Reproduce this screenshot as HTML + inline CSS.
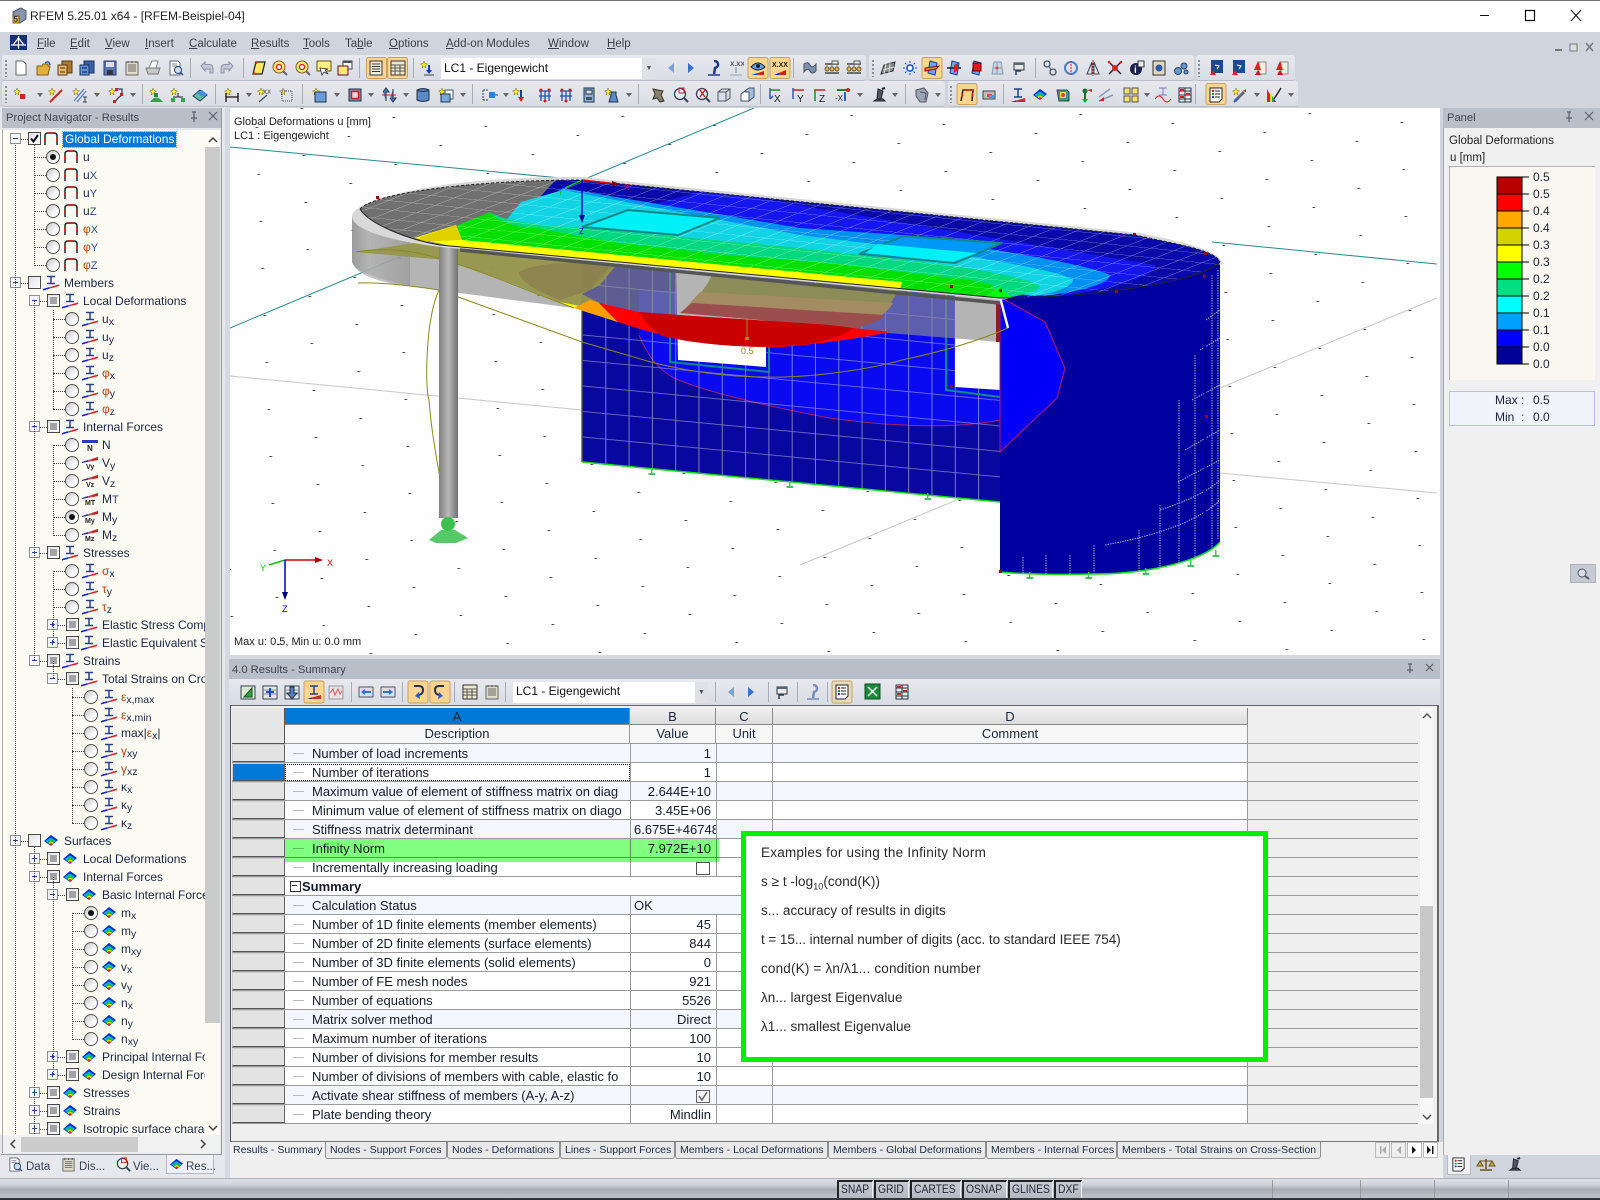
<!DOCTYPE html>
<html lang="en"><head><meta charset="utf-8"><title>RFEM 5.25.01 x64 - [RFEM-Beispiel-04]</title>
<style>
html,body{margin:0;padding:0;width:1600px;height:1200px;overflow:hidden;background:#d0d4dd;font-family:"Liberation Sans",sans-serif;font-size:12px;color:#1a2438}
.a{position:absolute}
.tx{position:absolute;white-space:nowrap}
#title{left:0;top:0;width:1600px;height:32px;background:#fff;border-top:1px solid #707070;box-sizing:border-box}
.mn{position:absolute;top:38px;font-size:11.5px;color:#3a3f4a;white-space:nowrap}
.tb{position:absolute;border-radius:3px;background:linear-gradient(#e7e9ee,#d9dce3);border-bottom:1px solid #b9bdc7;box-sizing:border-box}
.hd{position:absolute;background:#b9bfc9;color:#3c4452;height:20px;line-height:21px;box-sizing:border-box;padding-left:4px;font-size:11.2px}
#tree{left:0;top:130px;width:205px;height:1005px;overflow:hidden;background:#fbfbf4}
.r{position:relative;height:18px;line-height:18px;white-space:nowrap;--l:0}
.r.P::before,.r.K::before{content:"";position:absolute;top:9px;border-top:1px dotted #444}
.r.P::before{left:calc(21px + var(--l)*18.7px);width:7px}
.r.K::before{left:calc(34px + var(--l)*19px);width:12px}
.e{position:absolute;left:calc(10px + var(--l)*18.7px);top:3px;width:11px;height:11px;box-sizing:border-box;border:1px solid #8b8f98;background:#f4f5f8}
.e::before{content:"";position:absolute;left:2px;top:4px;width:5px;height:1px;background:#27468c}
.e.q::after{content:"";position:absolute;left:4px;top:2px;width:1px;height:5px;background:#27468c}
.c{position:absolute;left:calc(28px + var(--l)*19px);top:2px;width:13px;height:13px;box-sizing:border-box;border:1px solid #4a4a4a;background:linear-gradient(135deg,#dfe1e6,#fff)}
.c.f::after{content:"";position:absolute;left:2px;top:2px;width:7px;height:7px;background:#a3a3a3}
.o{position:absolute;left:calc(46px + var(--l)*19px);top:2px;width:14px;height:14px;box-sizing:border-box;border:1px solid #555;border-radius:50%;background:linear-gradient(135deg,#c5c5c5,#fff 70%)}
.o.n::after{content:"";position:absolute;left:3px;top:3px;width:6px;height:6px;border-radius:50%;background:#111}
.i{position:absolute;top:1px;width:16px;height:16px;overflow:visible}
.P .i{left:calc(43px + var(--l)*19px)}
.K .i{left:calc(63px + var(--l)*19px)}
.t{position:absolute;font-size:12px;color:#1b2640}
.P .t{left:calc(64px + var(--l)*19px)}
.K .t{left:calc(83px + var(--l)*19px)}
.t sub{font-size:10.5px;line-height:0;vertical-align:-2px}
.t small{font-size:11px;color:#2d4a86}
.t u{text-decoration:none;color:#a8480f}
.sel{background:#0078d7;color:#fff!important;outline:1px dotted #e08a20;padding:0 2px;line-height:15px}
.tr{position:absolute;left:232px;width:1186px;height:19px;line-height:18px;font-size:13px;box-sizing:border-box;border-bottom:1px solid #9b9b9b;color:#141c2c;--f:#fff;
background:linear-gradient(#9b9b9b,#9b9b9b) 398px 0/1px 100% no-repeat,linear-gradient(#9b9b9b,#9b9b9b) 484px 0/1px 100% no-repeat,linear-gradient(#9b9b9b,#9b9b9b) 540px 0/1px 100% no-repeat,linear-gradient(#9b9b9b,#9b9b9b) 1015px 0/1px 100% no-repeat,linear-gradient(90deg,var(--f) 1015px,#efefef 1015px)}
.tr.b{--f:#f4f6fe}
.tr.n{background:linear-gradient(#9b9b9b,#9b9b9b) 398px 0/1px 100% no-repeat,linear-gradient(#9b9b9b,#9b9b9b) 540px 0/1px 100% no-repeat,linear-gradient(#9b9b9b,#9b9b9b) 1015px 0/1px 100% no-repeat,linear-gradient(90deg,var(--f) 1015px,#efefef 1015px)}
.st{position:absolute;left:0;top:0;width:53px;height:18px;box-sizing:border-box;background:#e3e3e3;border:1px solid #cfcfcf;border-bottom:1px solid #555;border-right:1px solid #666}
.ds{position:absolute;left:80px;top:2px;height:16px;line-height:16px;white-space:nowrap;width:317px;overflow:hidden}
.dl{position:absolute;left:61px;top:9px;width:11px;height:1px;background:#bbb}
.v{position:absolute;left:399px;width:80px;text-align:right;top:1px;height:17px;line-height:17px;white-space:nowrap}
.ch{position:absolute;height:17px;top:708px;line-height:17px;text-align:center;font-size:13px;background:linear-gradient(#f0f0f0,#dcdcdc);box-sizing:border-box;border-right:1px solid #8a8a8a;border-bottom:1px solid #8a8a8a}
.ch2{position:absolute;top:725px;height:19px;line-height:18px;text-align:center;font-size:13px;background:#f6f6f6;box-sizing:border-box;border-right:1px solid #9b9b9b;border-bottom:1px solid #9b9b9b}
.tab{position:absolute;top:1142px;height:17px;line-height:17px;font-size:10.5px;background:#e9e9e9;border:1px solid #8f8f8f;border-top:none;box-sizing:border-box;padding-left:4px;color:#1d2a44;border-radius:0 0 3px 3px;white-space:nowrap}
.sb{position:absolute;top:1180px;height:18px;line-height:14px;font-size:12px;box-sizing:border-box;border-left:2px solid #222;border-top:2px solid #222;border-right:1px solid #eee;padding-left:2px;color:#20283a;background:linear-gradient(#c9ccd3,#b4b8c1);overflow:hidden;white-space:nowrap}
.sb span{display:inline-block;transform:scaleX(.86);transform-origin:left center}
.lb{position:absolute;left:1533px;font-size:12px;color:#1a2438;line-height:14px}
.gb{position:absolute;left:761px;font-size:13.5px;letter-spacing:.15px;color:#2a2a2a;white-space:nowrap;line-height:18px}
.gb sub{font-size:9px;line-height:0}
</style></head><body>

<div id="title" class="a"></div>
<div class="tx" style="left:30px;top:9px;font-size:12px;color:#222">RFEM 5.25.01 x64 - [RFEM-Beispiel-04]</div>
<svg class="a" style="left:10px;top:7px" width="18" height="18" viewBox="0 0 18 18"><path d="M3 5l8-4 5 3v8l-6 4-7-4z" fill="#8796ad" stroke="#4c566a"/><path d="M3 9h6v7H3z" fill="#e9c04a" stroke="#7a5c14"/><text x="3.5" y="15" font-size="8" font-family="Liberation Sans" font-weight="bold" fill="#333">5</text></svg>
<svg class="a" style="left:1470px;top:4px" width="125" height="24" viewBox="0 0 125 24"><path d="M10 11.5h9" stroke="#111" stroke-width="1"/><path d="M55.500 6.500h9v10h-9z" fill="none" stroke="#111" stroke-width="1.200"/><path d="M101 6l10 11M111 6l-10 11" stroke="#111" stroke-width="1"/></svg>

<!-- menu -->
<svg class="a" style="left:10px;top:35px" width="18" height="16"><rect width="17" height="15" fill="#15307a"/><path d="M1 10h15M8.500 1v13M3 10l5.500-7 5.500 7" stroke="#fff" fill="none" stroke-width="1.200"/></svg>
<span class="mn" style="left:37px"><u>F</u>ile</span><span class="mn" style="left:70px"><u>E</u>dit</span><span class="mn" style="left:105px"><u>V</u>iew</span><span class="mn" style="left:145px"><u>I</u>nsert</span><span class="mn" style="left:189px"><u>C</u>alculate</span><span class="mn" style="left:251px"><u>R</u>esults</span><span class="mn" style="left:303px"><u>T</u>ools</span><span class="mn" style="left:345px">Ta<u>b</u>le</span><span class="mn" style="left:389px"><u>O</u>ptions</span><span class="mn" style="left:446px"><u>A</u>dd-on Modules</span><span class="mn" style="left:548px"><u>W</u>indow</span><span class="mn" style="left:607px"><u>H</u>elp</span>
<svg class="a" style="left:1550px;top:40px" width="50" height="14"><path d="M5 10h7" stroke="#777" stroke-width="2"/><path d="M20 4h7v7h-7z" fill="#ddd" stroke="#777"/><path d="M36 3l7 8M43 3l-7 8" stroke="#777" stroke-width="1.500"/></svg>

<!-- toolbars -->
<div class="tb" style="left:2px;top:55px;width:864px;height:26px"></div>
<div class="tb" style="left:869px;top:55px;width:325px;height:26px"></div>
<div class="tb" style="left:1196px;top:55px;width:99px;height:26px"></div>
<div class="tb" style="left:2px;top:81px;width:943px;height:26px"></div>
<div class="tb" style="left:948px;top:81px;width:350px;height:26px"></div>
<div class="a" style="left:441px;top:58px;width:201px;height:21px;background:#fff"></div>
<div class="tx" style="left:444px;top:61px;font-size:12px;color:#111">LC1 - Eigengewicht</div>
<div class="a" style="left:642px;top:58px;width:14px;height:21px;background:#dfe1e6;text-align:center;font-size:7px;line-height:21px;color:#555">▼</div>

<!-- navigator -->
<div class="a" style="left:0;top:107px;width:225px;height:1071px;background:#e6e8ed"></div>
<div class="hd" style="left:2px;top:108px;width:219px">Project Navigator - Results</div>
<div id="tree" class="a">
<div class="r P"><i class="e"></i><i class="c"></i><svg class="c" style="border:0;background:none;overflow:visible" viewBox="0 0 13 13"><path d="M3 6.500l2.500 3L10 3" fill="none" stroke="#111" stroke-width="2"/></svg><svg class="i"><use href="#def"/></svg><span class="t sel" style="left:63px;top:2px">Global Deformations</span></div>
<div class="r K"><i class="o n"></i><svg class="i"><use href="#def"/></svg><span class="t">u</span></div>
<div class="r K"><i class="o"></i><svg class="i"><use href="#def"/></svg><span class="t">u<small>X</small></span></div>
<div class="r K"><i class="o"></i><svg class="i"><use href="#def"/></svg><span class="t">u<small>Y</small></span></div>
<div class="r K"><i class="o"></i><svg class="i"><use href="#def"/></svg><span class="t">u<small>Z</small></span></div>
<div class="r K"><i class="o"></i><svg class="i"><use href="#def"/></svg><span class="t"><u>φ</u><small>X</small></span></div>
<div class="r K"><i class="o"></i><svg class="i"><use href="#def"/></svg><span class="t"><u>φ</u><small>Y</small></span></div>
<div class="r K"><i class="o"></i><svg class="i"><use href="#def"/></svg><span class="t"><u>φ</u><small>Z</small></span></div>
<div class="r P"><i class="e"></i><i class="c"></i><svg class="i"><use href="#mem"/></svg><span class="t">Members</span></div>
<div class="r P" style="--l:1"><i class="e"></i><i class="c f"></i><svg class="i"><use href="#mem"/></svg><span class="t">Local Deformations</span></div>
<div class="r K" style="--l:1"><i class="o"></i><svg class="i"><use href="#mem"/></svg><span class="t">u<sub>x</sub></span></div>
<div class="r K" style="--l:1"><i class="o"></i><svg class="i"><use href="#mem"/></svg><span class="t">u<sub>y</sub></span></div>
<div class="r K" style="--l:1"><i class="o"></i><svg class="i"><use href="#mem"/></svg><span class="t">u<sub>z</sub></span></div>
<div class="r K" style="--l:1"><i class="o"></i><svg class="i"><use href="#mem"/></svg><span class="t"><u>φ</u><sub>x</sub></span></div>
<div class="r K" style="--l:1"><i class="o"></i><svg class="i"><use href="#mem"/></svg><span class="t"><u>φ</u><sub>y</sub></span></div>
<div class="r K" style="--l:1"><i class="o"></i><svg class="i"><use href="#mem"/></svg><span class="t"><u>φ</u><sub>z</sub></span></div>
<div class="r P" style="--l:1"><i class="e"></i><i class="c f"></i><svg class="i"><use href="#mem"/></svg><span class="t">Internal Forces</span></div>
<div class="r K" style="--l:1"><i class="o"></i><svg class="i" viewBox="0 0 16 16"><path d="M0 3h16v3H0z" fill="#2a3ec0"/><text x="5" y="14" font-size="8" font-weight="bold" font-family="Liberation Sans" fill="#222">N</text></svg><span class="t">N</span></div>
<div class="r K" style="--l:1"><i class="o"></i><svg class="i" viewBox="0 0 16 16"><use href="#wdg"/><text x="4" y="14" font-size="7" font-weight="bold" font-family="Liberation Sans" fill="#222">Vy</text></svg><span class="t">V<sub>y</sub></span></div>
<div class="r K" style="--l:1"><i class="o"></i><svg class="i" viewBox="0 0 16 16"><use href="#wdg"/><text x="4" y="14" font-size="7" font-weight="bold" font-family="Liberation Sans" fill="#222">Vz</text></svg><span class="t">V<sub>z</sub></span></div>
<div class="r K" style="--l:1"><i class="o"></i><svg class="i" viewBox="0 0 16 16"><use href="#wdg"/><text x="3" y="14" font-size="7" font-weight="bold" font-family="Liberation Sans" fill="#222">MT</text></svg><span class="t">M<small>T</small></span></div>
<div class="r K" style="--l:1"><i class="o n"></i><svg class="i" viewBox="0 0 16 16"><use href="#wdg"/><text x="3" y="14" font-size="7" font-weight="bold" font-family="Liberation Sans" fill="#222">My</text></svg><span class="t">M<sub>y</sub></span></div>
<div class="r K" style="--l:1"><i class="o"></i><svg class="i" viewBox="0 0 16 16"><use href="#wdg"/><text x="3" y="14" font-size="7" font-weight="bold" font-family="Liberation Sans" fill="#222">Mz</text></svg><span class="t">M<sub>z</sub></span></div>
<div class="r P" style="--l:1"><i class="e"></i><i class="c f"></i><svg class="i"><use href="#mem"/></svg><span class="t">Stresses</span></div>
<div class="r K" style="--l:1"><i class="o"></i><svg class="i"><use href="#mem"/></svg><span class="t"><u>σ</u><sub>x</sub></span></div>
<div class="r K" style="--l:1"><i class="o"></i><svg class="i"><use href="#mem"/></svg><span class="t"><u>τ</u><sub>y</sub></span></div>
<div class="r K" style="--l:1"><i class="o"></i><svg class="i"><use href="#mem"/></svg><span class="t"><u>τ</u><sub>z</sub></span></div>
<div class="r P" style="--l:2"><i class="e q"></i><i class="c f"></i><svg class="i"><use href="#mem"/></svg><span class="t">Elastic Stress Components</span></div>
<div class="r P" style="--l:2"><i class="e q"></i><i class="c f"></i><svg class="i"><use href="#mem"/></svg><span class="t">Elastic Equivalent Stresses</span></div>
<div class="r P" style="--l:1"><i class="e"></i><i class="c f"></i><svg class="i"><use href="#mem"/></svg><span class="t">Strains</span></div>
<div class="r P" style="--l:2"><i class="e"></i><i class="c f"></i><svg class="i"><use href="#mem"/></svg><span class="t">Total Strains on Cross-Section</span></div>
<div class="r K" style="--l:2"><i class="o"></i><svg class="i"><use href="#mem"/></svg><span class="t"><u>ε</u><sub>x,max</sub></span></div>
<div class="r K" style="--l:2"><i class="o"></i><svg class="i"><use href="#mem"/></svg><span class="t"><u>ε</u><sub>x,min</sub></span></div>
<div class="r K" style="--l:2"><i class="o"></i><svg class="i"><use href="#mem"/></svg><span class="t">max|<u>ε</u><sub>x</sub>|</span></div>
<div class="r K" style="--l:2"><i class="o"></i><svg class="i"><use href="#mem"/></svg><span class="t"><u>γ</u><sub>xy</sub></span></div>
<div class="r K" style="--l:2"><i class="o"></i><svg class="i"><use href="#mem"/></svg><span class="t"><u>γ</u><sub>xz</sub></span></div>
<div class="r K" style="--l:2"><i class="o"></i><svg class="i"><use href="#mem"/></svg><span class="t">κ<sub>x</sub></span></div>
<div class="r K" style="--l:2"><i class="o"></i><svg class="i"><use href="#mem"/></svg><span class="t">κ<sub>y</sub></span></div>
<div class="r K" style="--l:2"><i class="o"></i><svg class="i"><use href="#mem"/></svg><span class="t">κ<sub>z</sub></span></div>
<div class="r P"><i class="e"></i><i class="c"></i><svg class="i"><use href="#srf"/></svg><span class="t">Surfaces</span></div>
<div class="r P" style="--l:1"><i class="e q"></i><i class="c f"></i><svg class="i"><use href="#srf"/></svg><span class="t">Local Deformations</span></div>
<div class="r P" style="--l:1"><i class="e"></i><i class="c f"></i><svg class="i"><use href="#srf"/></svg><span class="t">Internal Forces</span></div>
<div class="r P" style="--l:2"><i class="e"></i><i class="c f"></i><svg class="i"><use href="#srf"/></svg><span class="t">Basic Internal Forces</span></div>
<div class="r K" style="--l:2"><i class="o n"></i><svg class="i"><use href="#srf"/></svg><span class="t">m<sub>x</sub></span></div>
<div class="r K" style="--l:2"><i class="o"></i><svg class="i"><use href="#srf"/></svg><span class="t">m<sub>y</sub></span></div>
<div class="r K" style="--l:2"><i class="o"></i><svg class="i"><use href="#srf"/></svg><span class="t">m<sub>xy</sub></span></div>
<div class="r K" style="--l:2"><i class="o"></i><svg class="i"><use href="#srf"/></svg><span class="t">v<sub>x</sub></span></div>
<div class="r K" style="--l:2"><i class="o"></i><svg class="i"><use href="#srf"/></svg><span class="t">v<sub>y</sub></span></div>
<div class="r K" style="--l:2"><i class="o"></i><svg class="i"><use href="#srf"/></svg><span class="t">n<sub>x</sub></span></div>
<div class="r K" style="--l:2"><i class="o"></i><svg class="i"><use href="#srf"/></svg><span class="t">n<sub>y</sub></span></div>
<div class="r K" style="--l:2"><i class="o"></i><svg class="i"><use href="#srf"/></svg><span class="t">n<sub>xy</sub></span></div>
<div class="r P" style="--l:2"><i class="e q"></i><i class="c f"></i><svg class="i"><use href="#srf"/></svg><span class="t">Principal Internal Forces</span></div>
<div class="r P" style="--l:2"><i class="e q"></i><i class="c f"></i><svg class="i"><use href="#srf"/></svg><span class="t">Design Internal Forces</span></div>
<div class="r P" style="--l:1"><i class="e q"></i><i class="c f"></i><svg class="i"><use href="#srf"/></svg><span class="t">Stresses</span></div>
<div class="r P" style="--l:1"><i class="e q"></i><i class="c f"></i><svg class="i"><use href="#srf"/></svg><span class="t">Strains</span></div>
<div class="r P" style="--l:1"><i class="e q"></i><i class="c f"></i><svg class="i"><use href="#srf"/></svg><span class="t">Isotropic surface characteristics</span></div>
</div>
<svg class="a" style="left:0;top:130px" width="205" height="1005"><g stroke="#444" stroke-dasharray="1 1" fill="none"><path d="M15.500 15V1005M34.500 15V135M34.500 171V531M34.500 717V1005M53.500 180V279M53.500 315V405M53.500 441V513M53.500 531V549M53.500 747V945M72.500 558V693M72.500 783V909"/></g></svg>
<div class="a" style="left:205px;top:130px;width:15px;height:1005px;background:#fbfbf4"></div>
<div class="a" style="left:205px;top:147px;width:15px;height:876px;background:#cbcbcb"></div>
<svg class="a" style="left:207px;top:135px" width="12" height="10"><path d="M2 7l4-4 4 4" fill="none" stroke="#444" stroke-width="1.500"/></svg>
<svg class="a" style="left:207px;top:1124px" width="12" height="10"><path d="M2 2l4 4 4-4" fill="none" stroke="#444" stroke-width="1.500"/></svg>
<div class="a" style="left:3px;top:1135px;width:217px;height:18px;background:#f1f1f1"></div>
<div class="a" style="left:21px;top:1137px;width:117px;height:15px;background:#cbcbcb"></div>
<svg class="a" style="left:8px;top:1139px" width="200" height="12"><path d="M7 1L3 5l4 4M193 1l4 4-4 4" fill="none" stroke="#444" stroke-width="1.500"/></svg>
<div class="a" style="left:2px;top:130px;width:1px;height:1023px;background:#aaa"></div>
<div class="a" style="left:221px;top:108px;width:1px;height:1046px;background:#999"></div>
<div class="a" style="left:1px;top:1154px;width:221px;height:1px;background:#999"></div>
<div class="a" style="left:166px;top:1155px;width:48px;height:19px;background:#eef0f4;border:1px solid #b4b8c0;border-top:none;box-sizing:border-box"></div>
<div class="tx" style="left:26px;top:1161px;font-size:11.5px;color:#3a4355">Data</div><div class="tx" style="left:79px;top:1161px;font-size:11.5px;color:#3a4355">Dis...</div><div class="tx" style="left:133px;top:1161px;font-size:11.5px;color:#3a4355">Vie...</div><div class="tx" style="left:186px;top:1161px;font-size:11.5px;color:#3a4355">Res...</div>

<!-- 3D view -->
<div class="a" style="left:225px;top:107px;width:5px;height:548px;background:#d5d9e1"></div>
<svg class="a" style="left:230px;top:108px" width="1210" height="547" viewBox="230 108 1210 547" font-family="Liberation Sans">
<defs>
<pattern id="dots" patternUnits="userSpaceOnUse" width="1" height="1" patternTransform="matrix(92 9 -45 19 852 115)"><rect width=".018" height=".05" fill="#111"/></pattern>
<pattern id="wg" patternUnits="userSpaceOnUse" width="1" height="1" patternTransform="matrix(23.300 2.230 0 25.500 582 462)"><path d="M0 .01H1M.02 0V1" stroke="#a8a8d0" stroke-opacity=".75" stroke-width=".04" fill="none"/></pattern>
<pattern id="tg" patternUnits="userSpaceOnUse" width="1" height="1" patternTransform="matrix(23.500 2.340 -19 7.500 582 182)"><path d="M0 .02H1M.02 0V1" stroke="#fff" stroke-opacity=".42" stroke-width=".05" fill="none"/></pattern>
<clipPath id="top"><path d="M360 209C375 192 480 180 582 180L1135 235C1180 245 1215 250 1220 262C1205 280 1100 298 1000 298L440 245C410 240 370 225 360 209Z"/></clipPath>
<linearGradient id="cg" x1="0" x2="1"><stop offset="0" stop-color="#808080"/><stop offset=".5" stop-color="#b8b8b8"/><stop offset="1" stop-color="#707070"/></linearGradient>
<linearGradient id="sg" x1="0" x2="1"><stop offset="0" stop-color="#949494"/><stop offset=".3" stop-color="#b4b4b4"/><stop offset="1" stop-color="#9a9a9a"/></linearGradient>
</defs>
<rect x="230" y="108" width="1210" height="547" fill="#fefefe"/>
<rect x="230" y="108" width="1210" height="547" fill="url(#dots)"/>
<g fill="none">
<path d="M230 147L582 180M1212 242L1437 264M230 328L754 108" stroke="#2a8a8e" stroke-width="1"/>
<path d="M230 376L582 410M1220 473L1437 493M800 565L1000 482M1220 388L1437 298" stroke="#c8c8c8" stroke-width="1"/>
</g>
<!-- wall -->
<path d="M582 258L1000 297V502L582 462Z" fill="#0808a0"/>
<path d="M639 290L1000 297V420C960 428 900 428 830 418C760 405 700 390 674 378C655 368 645 350 639 335Z" fill="#0a0af0"/>
<path d="M1000 420C960 428 900 428 830 418C760 405 700 390 674 378C655 368 645 350 639 335" fill="none" stroke="#a02070"/>
<path d="M582 258L1000 297V502L582 462Z" fill="url(#wg)"/>
<path d="M676 262L766 270V367L678 360Z" fill="#fff"/>
<path d="M955 288L1000 292V390L955 387Z" fill="#fff"/>
<path d="M670 262V362L769 372V345" fill="none" stroke="#108888" stroke-width="2"/>
<path d="M946 285V390L1000 397" fill="none" stroke="#108888" stroke-width="2"/>
<path d="M582 258V462" stroke="#111"/>
<path d="M582 462L1000 502" stroke="#10e010" stroke-width="1.500"/>
<!-- cylinder -->
<path d="M1000 297C1100 297 1205 280 1220 262V542C1205 560 1150 574 1094 574C1060 575 1020 574 1000 572Z" fill="#0000a0"/>
<path d="M1000 297L1045 322L1065 368L1057 398L1000 452Z" fill="#0000f8" stroke="#b02060"/>
<path d="M1000 572C1020 574 1060 575 1094 574C1150 574 1205 560 1220 542" fill="none" stroke="#10e010" stroke-width="1.500"/>
<g fill="none" stroke="#a8a8cc" stroke-dasharray="1.500 1">
<path d="M1218 270V540M1212 275V548M1195 355V558M1179 400V564M1160 505V570M1139 530V574M1094 545V574M1070 555V574M1046 555V574M1023 557V574"/>
<path d="M1206 320L1220 310M1200 350L1220 338M1192 400L1220 385M1185 450L1220 430M1178 482L1220 460M1160 510C1190 500 1210 490 1220 480M1105 545C1160 535 1200 520 1220 500"/>
</g>
<path d="M1205 330V545" stroke="#000090" stroke-width="2"/>
<!-- slab side translucent -->
<path d="M352 216V262C356 275 400 285 437 290L574 308L1000 342V297L414 238C395 235 370 225 360 209Z" fill="rgb(140,140,140)" fill-opacity=".65"/>
<path d="M352 216V262C356 275 380 283 410 286L410 238C390 235 360 225 352 216Z" fill="url(#sg)" fill-opacity=".75"/>
<path d="M996 302H1000V342L996 342Z" fill="#8a2020"/>
<!-- deformed contour shape -->
<path d="M356 252L414 243L622 258L600 285L582 294L600 303L574 308C530 290 480 270 444 260Z" fill="#96964a" fill-opacity=".92"/>
<path d="M519 272C535 262 585 260 612 265L590 290L560 300C540 292 520 283 519 272Z" fill="#8a7c4e" fill-opacity=".7"/>
<path d="M560 302L574 308L618 322L600 310Z" fill="#ffff00"/>
<path d="M574 308L590 300L599 303L618 322Z" fill="#ffa000"/>
<path d="M712 275L898 290C892 305 880 318 853 328L682 312C695 300 705 290 712 275Z" fill="#8c8c58"/>
<path d="M700 292L893 303C888 312 875 322 853 328L682 312Z" fill="#a38c62"/>
<path d="M692 303L885 315C878 322 865 326 853 328L680 313Z" fill="#9a4e4e"/>
<path d="M599 303L639 312L678 315L830 325L853 328L890 332C850 340 810 345 780 347C720 348 670 340 618 322Z" fill="#ff0000"/>
<path d="M639 312C645 322 655 332 662 336C700 345 750 349 800 345C825 342 845 335 853 328L830 325L678 315Z" fill="#c80000"/>
<!-- deformed lines -->
<g fill="none" stroke="#8a8a20" stroke-width="1">
<path d="M358 283C385 282 420 287 439 290L582 342L651 362C690 372 730 377 766 377C800 378 860 372 902 360C950 350 985 338 1008 328"/>
<path d="M439 290C425 320 425 390 429 400C432 440 442 490 448 515"/>
<path d="M356 252C390 246 420 252 444 260C480 270 530 292 574 308"/>
</g>
<path d="M1000 297L1008 328" stroke="#f8f8e0" stroke-width="2.500"/>
<!-- column -->
<rect x="439" y="237" width="19" height="281" fill="url(#cg)"/>
<path d="M429 540L441 530H455L468 538L456 543H436Z" fill="#56c868"/>
<circle cx="448" cy="524" r="7" fill="#3cc050"/>
<rect x="439" y="236" width="19" height="5" fill="#7a2020"/>
<!-- top surface -->
<path d="M352 216C352 200 440 176 582 177L1140 233C1190 243 1222 252 1222 264L1000 300L440 247C400 242 352 232 352 216Z" fill="#d8d8d8"/>
<g clip-path="url(#top)">
<rect x="340" y="170" width="900" height="140" fill="#707070"/>
<path d="M565 170L1230 170V300H1000L500 240Z" fill="#0a0aa8"/>
<path d="M708 190L1155 265C1158 272 1130 285 1069 295L500 245Z" fill="#1515ee"/>
<path d="M563 188L800 228L902 235C1000 250 1090 265 1110 275C1110 282 1090 290 1045 296L500 240Z" fill="#0090f0"/>
<path d="M521 202L563 190L800 235L963 255C1020 265 1060 272 1073 280C1073 285 1060 292 1035 296L490 240Z" fill="#10d4e4"/>
<path d="M490 212C500 220 540 226 574 227L800 248L922 262C990 270 1035 280 1040 287C1035 292 1020 296 1004 298L450 240Z" fill="#00d880"/>
<path d="M458 225L490 212C498 222 520 228 536 228L613 242L727 255L830 263L971 280L992 285L1000 300L450 245Z" fill="#00e000"/>
<rect x="340" y="170" width="900" height="140" fill="url(#tg)"/>
<path d="M414 238L456 225L462 240L902 282L900 290L460 248Z" fill="#ffff00"/>
<path d="M420 237L456 225L462 240L420 242Z" fill="#e0d000"/>
<path d="M982 298L1000 287L1012 298Z" fill="#00ff00"/>
</g>
<path d="M360 209C370 225 410 240 440 245L1000 298C1100 298 1205 280 1220 262" fill="none" stroke="#222" stroke-width="1"/>
<path d="M460 250L1000 303" stroke="#555" stroke-width="3.500" fill="none"/>
<path d="M582 180L1135 235C1180 245 1215 250 1220 262M360 209C375 192 480 180 582 180" fill="none" stroke="#222" stroke-dasharray="3 2"/>
<!-- openings -->
<path d="M582 227L628 210L720 218L678 235Z" fill="#00f0f8" stroke="#108888" stroke-width="2"/>
<path d="M859 254L904 236L1002 243L955 263Z" fill="#0098f8" stroke="#108888" stroke-width="2"/>
<path d="M865 253L878 244L977 253L953 262Z" fill="#00f0f8"/>
<!-- red markers -->
<g fill="#8a1010"><rect x="376" y="196" width="3" height="3"/><rect x="1133" y="233" width="3" height="3"/><rect x="1204" y="252" width="3" height="3"/><rect x="1203" y="275" width="3" height="3"/><rect x="1115" y="290" width="3" height="3"/><rect x="999" y="289" width="3" height="3"/><rect x="950" y="285" width="3" height="3"/><rect x="950" y="385" width="3" height="3"/><rect x="999" y="570" width="3" height="3"/><rect x="1205" y="415" width="3" height="3"/></g>
<!-- axes -->
<path d="M582 180L616 184" stroke="#e00000" stroke-width="1.500"/><path d="M612 181l8 3-8 2z" fill="#800000"/><text x="624" y="190" font-size="8" fill="#e00000">X</text>
<path d="M582 180L565 188" stroke="#10d010" stroke-width="1.500"/><text x="558" y="195" font-size="8" fill="#10c010">Y</text>
<path d="M582 180V218" stroke="#0000e0" stroke-width="1.500"/><path d="M579 215l3 8 3-8z" fill="#000090"/><text x="579" y="234" font-size="8" fill="#0000e0">Z</text>
<path d="M285 560H318" stroke="#d00000" stroke-width="1.500"/><path d="M315 557l8 3-8 3z" fill="#a00000"/><text x="327" y="566" font-size="9" fill="#d00000">X</text>
<path d="M285 560L269 565" stroke="#10c010" stroke-width="1.500"/><text x="260" y="571" font-size="9" fill="#10c010">Y</text>
<path d="M285 560V594" stroke="#0000c0" stroke-width="1.500"/><path d="M282 592l3 8 3-8z" fill="#000080"/><text x="282" y="612" font-size="9" fill="#0000c0">Z</text>
<!-- 0.5 pin -->
<path d="M747 318V338" stroke="#a08a20"/><rect x="745" y="337" width="4" height="3" fill="#a08a20"/><text x="741" y="354" font-size="9" fill="#8a8a20">0.5</text>
<!-- supports -->
<g fill="#46c060"><path id="sp" d="M651 468h1.500v5h2.500v2h-6.500v-2h2.500z"/><use href="#sp" x="138" y="13"/><use href="#sp" x="276" y="25"/><use href="#sp" x="378" y="104"/><use href="#sp" x="437" y="104"/><use href="#sp" x="494" y="100"/><use href="#sp" x="539" y="92"/><use href="#sp" x="564" y="82"/></g>
<text x="234" y="125" font-size="11" fill="#222">Global Deformations u [mm]</text>
<text x="234" y="139" font-size="11" fill="#222">LC1 : Eigengewicht</text>
<text x="234" y="645" font-size="11" fill="#222">Max u: 0.5, Min u: 0.0 mm</text>
</svg>

<!-- right panel -->
<div class="a" style="left:1440px;top:107px;width:160px;height:1071px;background:#d0d4dd"></div>
<div class="hd" style="left:1443px;top:108px;width:157px">Panel</div>
<div class="a" style="left:1443px;top:128px;width:157px;height:1027px;background:#f0f0f0;border-left:1px solid #aaa;box-sizing:border-box"></div>
<div class="tx" style="left:1449px;top:135px;font-size:11.5px;color:#222">Global Deformations</div>
<div class="tx" style="left:1450px;top:152px;font-size:11.5px;color:#222">u [mm]</div>
<div class="a" style="left:1449px;top:166px;width:146px;height:214px;background:#faf6f0;border:1px solid #b0b0b0;border-right:none;border-bottom:none;box-sizing:border-box"></div>
<svg class="a" style="left:1490px;top:170px" width="45" height="200"><g stroke="#000"><rect x="7" y="7" width="25" height="17" fill="#b80000"/><rect x="7" y="24" width="25" height="17" fill="#ff0000"/><rect x="7" y="41" width="25" height="17" fill="#ffa800"/><rect x="7" y="58" width="25" height="17" fill="#d2d200"/><rect x="7" y="75" width="25" height="17" fill="#ffff00"/><rect x="7" y="92" width="25" height="17" fill="#00ff00"/><rect x="7" y="109" width="25" height="17" fill="#00e080"/><rect x="7" y="126" width="25" height="17" fill="#00ffff"/><rect x="7" y="143" width="25" height="17" fill="#00a0ff"/><rect x="7" y="160" width="25" height="17" fill="#0000ff"/><rect x="7" y="177" width="25" height="17" fill="#000096"/><path d="M32 7h7M32 24h7M32 41h7M32 58h7M32 75h7M32 92h7M32 109h7M32 126h7M32 143h7M32 160h7M32 177h7M32 194h7"/></g></svg>
<span class="lb" style="top:170px">0.5</span><span class="lb" style="top:187px">0.5</span><span class="lb" style="top:204px">0.4</span><span class="lb" style="top:221px">0.4</span><span class="lb" style="top:238px">0.3</span><span class="lb" style="top:255px">0.3</span><span class="lb" style="top:272px">0.2</span><span class="lb" style="top:289px">0.2</span><span class="lb" style="top:306px">0.1</span><span class="lb" style="top:323px">0.1</span><span class="lb" style="top:340px">0.0</span><span class="lb" style="top:357px">0.0</span>
<div class="a" style="left:1449px;top:391px;width:146px;height:35px;background:#f0f4fa;border:1px solid #b8c0e4;box-sizing:border-box"></div>
<span class="lb" style="left:1495px;top:393px">Max</span><span class="lb" style="left:1521px;top:393px">:</span><span class="lb" style="top:393px">0.5</span>
<span class="lb" style="left:1495px;top:410px">Min</span><span class="lb" style="left:1521px;top:410px">:</span><span class="lb" style="top:410px">0.0</span>
<div class="a" style="left:1570px;top:564px;width:26px;height:19px;background:#c6cad3;border:1px solid #aeb2bb;box-sizing:border-box"></div>
<div class="a" style="left:1447px;top:1155px;width:24px;height:20px;background:#eef0f4;border:1px solid #b8bcc4;border-top:none;box-sizing:border-box"></div>

<!-- Results panel -->
<div class="a" style="left:225px;top:655px;width:1215px;height:523px;background:#d5d9e1"></div>
<div class="hd" style="left:229px;top:659px;width:1211px;padding-left:3px;line-height:22px">4.0 Results - Summary</div>
<div class="a" style="left:229px;top:679px;width:1211px;height:26px;background:linear-gradient(#e7e9ee,#d9dce3)"></div>
<div class="a" style="left:513px;top:682px;width:195px;height:21px;background:#fff"></div>
<div class="tx" style="left:516px;top:684px;font-size:12px;color:#111">LC1 - Eigengewicht</div>
<div class="a" style="left:695px;top:682px;width:13px;height:21px;background:#dfe1e6;text-align:center;font-size:7px;line-height:21px;color:#555">▼</div>
<div class="a" style="left:230px;top:705px;width:1209px;height:437px;background:#efefef;border-top:1px solid #666;border-left:1px solid #555;border-right:2px solid #666;box-sizing:border-box"></div>
<div class="a" style="left:230px;top:1142px;width:1213px;height:36px;background:#efefef"></div>
<div class="a" style="left:232px;top:708px;width:53px;height:36px;background:#e6e6e6;border-right:1px solid #555;border-bottom:1px solid #555;box-sizing:border-box"></div>
<div class="ch" style="left:285px;width:345px;background:#0078d7;color:#222">A</div><div class="ch" style="left:630px;width:86px">B</div><div class="ch" style="left:716px;width:57px">C</div><div class="ch" style="left:773px;width:475px">D</div>
<div class="ch2" style="left:285px;width:345px">Description</div><div class="ch2" style="left:630px;width:86px">Value</div><div class="ch2" style="left:716px;width:57px">Unit</div><div class="ch2" style="left:773px;width:475px">Comment</div>
<div class="a" style="left:1248px;top:725px;width:170px;height:19px;border-bottom:1px solid #9b9b9b;box-sizing:border-box"></div>
<div class="tr b" style="top:744px"><i class="st"></i><i class="dl"></i><span class="ds">Number of load increments</span><span class="v">1</span></div>
<div class="tr" style="top:763px"><i class="st" style="background:#0078d7"></i><i class="dl"></i><span class="ds">Number of iterations</span><span class="v">1</span></div>
<div class="a" style="left:285px;top:764px;width:345px;height:17px;border:1px dotted #111;box-sizing:border-box"></div>
<div class="tr b" style="top:782px"><i class="st"></i><i class="dl"></i><span class="ds">Maximum value of element of stiffness matrix on diag</span><span class="v">2.644E+10</span></div>
<div class="tr" style="top:801px"><i class="st"></i><i class="dl"></i><span class="ds">Minimum value of element of stiffness matrix on diago</span><span class="v">3.45E+06</span></div>
<div class="tr b" style="top:820px"><i class="st"></i><i class="dl"></i><span class="ds">Stiffness matrix determinant</span><span class="v" style="left:402px;width:82px;overflow:hidden;text-align:left">6.675E+46748</span></div>
<div class="tr" style="top:839px"><i class="st"></i><i class="dl"></i><span class="ds">Infinity Norm</span><span class="v">7.972E+10</span></div>
<div class="tr" style="top:858px"><i class="st"></i><i class="dl"></i><span class="ds">Incrementally increasing loading</span><i class="a" style="left:464px;top:4px;width:14px;height:13px;background:#fff;border:1px solid #555;box-sizing:border-box"></i></div>
<div class="tr" style="top:877px;background:linear-gradient(#9b9b9b,#9b9b9b) 1015px 0/1px 100% no-repeat,linear-gradient(90deg,#fff 1015px,#efefef 1015px)"><i class="st"></i><i class="a" style="left:58px;top:4px;width:9px;height:9px;border:1px solid #333;background:linear-gradient(#333,#333) 1px 3px/5px 1px no-repeat"></i><b class="ds" style="left:70px">Summary</b></div>
<div class="tr b n" style="top:896px"><i class="st"></i><i class="dl"></i><span class="ds">Calculation Status</span><span class="v" style="left:402px;text-align:left">OK</span></div>
<div class="tr" style="top:915px"><i class="st"></i><i class="dl"></i><span class="ds">Number of 1D finite elements (member elements)</span><span class="v">45</span></div>
<div class="tr" style="top:934px"><i class="st"></i><i class="dl"></i><span class="ds">Number of 2D finite elements (surface elements)</span><span class="v">844</span></div>
<div class="tr" style="top:953px"><i class="st"></i><i class="dl"></i><span class="ds">Number of 3D finite elements (solid elements)</span><span class="v">0</span></div>
<div class="tr" style="top:972px"><i class="st"></i><i class="dl"></i><span class="ds">Number of FE mesh nodes</span><span class="v">921</span></div>
<div class="tr" style="top:991px"><i class="st"></i><i class="dl"></i><span class="ds">Number of equations</span><span class="v">5526</span></div>
<div class="tr b" style="top:1010px"><i class="st"></i><i class="dl"></i><span class="ds">Matrix solver method</span><span class="v">Direct</span></div>
<div class="tr" style="top:1029px"><i class="st"></i><i class="dl"></i><span class="ds">Maximum number of iterations</span><span class="v">100</span></div>
<div class="tr" style="top:1048px"><i class="st"></i><i class="dl"></i><span class="ds">Number of divisions for member results</span><span class="v">10</span></div>
<div class="tr" style="top:1067px"><i class="st"></i><i class="dl"></i><span class="ds">Number of divisions of members with cable, elastic fo</span><span class="v">10</span></div>
<div class="tr b" style="top:1086px"><i class="st"></i><i class="dl"></i><span class="ds">Activate shear stiffness of members (A-y, A-z)</span><svg class="a" style="left:464px;top:4px" width="14" height="13"><rect x=".5" y=".5" width="13" height="12" fill="#f4f4f4" stroke="#666"/><path d="M3 6l3 4 5-8" fill="none" stroke="#666" stroke-width="1.500"/></svg></div>
<div class="tr" style="top:1105px"><i class="st"></i><i class="dl"></i><span class="ds">Plate bending theory</span><span class="v">Mindlin</span></div>
<div class="a" style="left:285px;top:839px;width:434px;height:23px;background:#80ff80;mix-blend-mode:multiply"></div>
<!-- grid scrollbar -->
<div class="a" style="left:1420px;top:708px;width:13px;height:416px;background:#f7f7f7"></div>
<div class="a" style="left:1420px;top:906px;width:13px;height:192px;background:#c8c8c8"></div>
<svg class="a" style="left:1421px;top:711px" width="12" height="10"><path d="M2 7l4-4 4 4" fill="none" stroke="#555" stroke-width="1.500"/></svg>
<svg class="a" style="left:1421px;top:1112px" width="12" height="10"><path d="M2 3l4 4 4-4" fill="none" stroke="#555" stroke-width="1.500"/></svg>
<!-- green note -->
<div class="a" style="left:741px;top:831px;width:527px;height:231px;background:#fff;border:5px solid #00f000;box-sizing:border-box"></div>
<div class="gb" style="top:844px;letter-spacing:.23px">Examples for using the Infinity Norm</div>
<div class="gb" style="top:873px;letter-spacing:.05px">s ≥ t -log<sub>10</sub>(cond(K))</div>
<div class="gb" style="top:902px;letter-spacing:.03px">s... accuracy of results in digits</div>
<div class="gb" style="top:931px;letter-spacing:-.05px">t = 15... internal number of digits (acc. to standard IEEE 754)</div>
<div class="gb" style="top:960px;letter-spacing:.18px">cond(K) = λn/λ1... condition number</div>
<div class="gb" style="top:989px;letter-spacing:.05px">λn... largest Eigenvalue</div>
<div class="gb" style="top:1018px;letter-spacing:.03px">λ1... smallest Eigenvalue</div>
<!-- sheet tabs -->
<div class="a" style="left:231px;top:1141px;width:1207px;height:1px;background:#777"></div>
<div class="tab" style="left:230px;width:95px;background:#f0f0f0;border-color:#f0f0f0;padding-left:2px;z-index:1">Results - Summary</div>
<div class="tab" style="left:325px;width:122px">Nodes - Support Forces</div>
<div class="tab" style="left:447px;width:113px">Nodes - Deformations</div>
<div class="tab" style="left:560px;width:115px">Lines - Support Forces</div>
<div class="tab" style="left:675px;width:153px">Members - Local Deformations</div>
<div class="tab" style="left:828px;width:158px">Members - Global Deformations</div>
<div class="tab" style="left:986px;width:131px">Members - Internal Forces</div>
<div class="tab" style="left:1117px;width:204px">Members - Total Strains on Cross-Section</div>
<svg class="a" style="left:1375px;top:1142px" width="63" height="17"><g fill="#eee" stroke="#bbb"><rect x=".5" y=".5" width="14" height="15"/><rect x="16.500" y=".5" width="14" height="15"/><rect x="32.500" y=".5" width="14" height="15" fill="#fff"/><rect x="48.500" y=".5" width="14" height="15" fill="#fff"/></g><path d="M5 4v8h1.500V4zM11 4l-4 4 4 4zM26 4l-4 4 4 4z" fill="#aaa"/><path d="M37 4l4 4-4 4zM52 4l4 4-4 4zM57 4v8h1.500V4z" fill="#111"/></svg>

<!-- status bar -->
<div class="a" style="left:0;top:1178px;width:1600px;height:20px;background:linear-gradient(#dcdfe5,#cfd2d9 30%,#a8acb5 55%,#c0c3ca);border-top:1px solid #b0b3ba;box-sizing:border-box"></div>
<div class="a" style="left:0;top:1198px;width:1600px;height:2px;background:#33373d"></div>
<div class="sb" style="left:837px;width:36px"><span>SNAP</span></div><div class="sb" style="left:874px;width:35px"><span>GRID</span></div><div class="sb" style="left:910px;width:51px"><span>CARTES</span></div><div class="sb" style="left:962px;width:45px"><span>OSNAP</span></div><div class="sb" style="left:1008px;width:45px"><span>GLINES</span></div><div class="sb" style="left:1054px;width:28px"><span>DXF</span></div>
<div class="a" style="left:1272px;top:1180px;width:1px;height:18px;background:#999"></div><div class="a" style="left:1360px;top:1180px;width:1px;height:18px;background:#999"></div><div class="a" style="left:1434px;top:1180px;width:1px;height:18px;background:#999"></div><div class="a" style="left:1508px;top:1180px;width:1px;height:18px;background:#999"></div>

<!-- icon overlay -->
<svg class="a" style="left:0;top:0;pointer-events:none" width="1600" height="1200" viewBox="0 0 1600 1200" font-family="Liberation Sans">
<defs>
<symbol id="def" viewBox="0 0 16 16"><path d="M2 14V5Q2 2 5 2H11Q14 2 14 5V14" fill="none" stroke="#222" stroke-width="1.500"/><path d="M2 10V6M14 10V6M5 2H11" stroke="#d01010" stroke-width="1.500"/></symbol>
<symbol id="wdg" viewBox="0 0 16 16"><path d="M0 7L16 2V5L0 8Z" fill="#b05060"/><path d="M0 7L6 5V6.500L0 8Z" fill="#2030d0"/><path d="M10 4L16 2V5L10 6Z" fill="#d02020"/></symbol>
<symbol id="mem" viewBox="0 0 16 16"><path d="M4 1.500h8M8 1.500v7M4 8.500h8" stroke="#26408a" stroke-width="1.500" fill="none"/><path d="M0 14L16 9.500V11L0 15.500Z" fill="#70506a"/><path d="M0 14L6 12.200V13.800L0 15.500Z" fill="#1020e0"/><path d="M10 11.200L16 9.500V11L10 12.700Z" fill="#e02020"/></symbol>
<symbol id="srf" viewBox="0 0 16 16"><path d="M1 8L8 2L15 7L8 13Z" fill="#0030d0"/><path d="M2.500 8L8 4.500L13 8L8 12Z" fill="#00b0e0"/><path d="M4 9L8 6.500L12 9L8 12Z" fill="#10c040"/><path d="M5.500 10L8 8.500L11 10L8 12.500Z" fill="#f0e000"/><path d="M6.500 11L8 10L10 11L8 13Z" fill="#e02010"/></symbol>
<symbol id="star" viewBox="0 0 16 16"><path d="M4 1l1 2.500 2.500.5-2 1.500.5 2.500-2-1.500-2 1.500.5-2.500-2-1.500 2.500-.5z" fill="#ffee30" stroke="#6a6a10" stroke-width=".5"/></symbol>
<symbol id="doc" viewBox="0 0 16 16"><path d="M3 1h7l3 3v11H3z" fill="#fff" stroke="#666"/></symbol>
<symbol id="fold" viewBox="0 0 16 16"><path d="M1 15V6h5l1-2h5v2h2l-2 9z" fill="#e0b040" stroke="#86601a"/><path d="M9 3q4-3 5 2" stroke="#2a60c0" fill="none" stroke-width="1.500"/></symbol>
<symbol id="cab" viewBox="0 0 16 16"><path d="M5 1h10v12H5z" fill="#a87830" stroke="#5a3a10"/><path d="M1 5h9v10H1z" fill="#e8b860" stroke="#5a3a10"/><path d="M3 8h5M3 12h5" stroke="#333"/></symbol>
<symbol id="cabb" viewBox="0 0 16 16"><path d="M5 1h10v12H5z" fill="#3a60a8" stroke="#1a3060"/><path d="M1 5h9v10H1z" fill="#5a90e0" stroke="#1a3060"/><path d="M3 8h5M3 12h5" stroke="#123"/></symbol>
<symbol id="save" viewBox="0 0 16 16"><path d="M2 1h12v14H2z" fill="#5a76b4" stroke="#2a3a70"/><path d="M4 2h8v5H4z" fill="#dde"/><path d="M5 10h6v5H5z" fill="#334"/></symbol>
<symbol id="note" viewBox="0 0 16 16"><path d="M2 2h12v13H2z" fill="#e0dcc8" stroke="#666"/><path d="M4 5h8M4 7h8M4 9h8M4 11h8" stroke="#666"/><path d="M4 1v2M8 1v2M12 1v2" stroke="#555"/></symbol>
<symbol id="print" viewBox="0 0 16 16"><path d="M4 8l3-7h6l-2 7z" fill="#fff" stroke="#888"/><path d="M1 8h14l-2 6H3z" fill="#c8c8c8" stroke="#777"/></symbol>
<symbol id="prev" viewBox="0 0 16 16"><path d="M2 1h8l2 2v12H2z" fill="#fff" stroke="#667"/><path d="M4 4h5M4 6h5" stroke="#889"/><circle cx="10" cy="10" r="3.500" fill="#cde" stroke="#247"/><path d="M12.500 12.500L15 15" stroke="#247" stroke-width="1.500"/></symbol>
<symbol id="und" viewBox="0 0 16 16"><path d="M3 6l4-4v2.500h4q4 0 4 4V13h-3V9H7v2z" fill="#c4cad8" stroke="#8892a8"/></symbol>
<symbol id="red" viewBox="0 0 16 16"><path d="M13 6L9 2v2.500H5q-4 0-4 4V13h3V9h5v2z" fill="#c4cad8" stroke="#8892a8"/></symbol>
<symbol id="ca1" viewBox="0 0 16 16"><path d="M4 2h5q4 0 4 4t-4 5" fill="none" stroke="#2a3040" stroke-width="2"/><path d="M9 8l-4 4 5 3z" fill="#2060c0"/></symbol>
<symbol id="ca2" viewBox="0 0 16 16"><path d="M12 2H7Q3 2 3 6t4 5" fill="none" stroke="#2a3040" stroke-width="2"/><path d="M7 8l4 4-5 3z" fill="#2060c0"/></symbol>
<symbol id="gt" viewBox="0 0 16 16"><path d="M1 2h14v13H1z" fill="#d8e8d0" stroke="#345"/><path d="M4 13L12 4v9z" fill="#30a040" stroke="#185020"/></symbol>
<symbol id="tp" viewBox="0 0 16 16"><path d="M1 2h14v13H1z" fill="#e8e8e8" stroke="#345"/><path d="M1 6h14M1 10h14" stroke="#889"/><path d="M8 4v9M4 8h8" stroke="#2050c0" stroke-width="2"/></symbol>
<symbol id="td" viewBox="0 0 16 16"><path d="M1 2h14v13H1z" fill="#e8e8e8" stroke="#345"/><path d="M1 6h14M1 10h14" stroke="#889"/><path d="M6 3h4v6h3l-5 6-5-6h3z" fill="#5080c0" stroke="#234"/></symbol>
<symbol id="chrt" viewBox="0 0 16 16"><path d="M1 2h14v13H1z" fill="#e8e0e0" stroke="#99a"/><path d="M2 9l3-4 2 6 3-6 2 5 2-3" fill="none" stroke="#d06060"/></symbol>
<symbol id="arl" viewBox="0 0 16 16"><path d="M1 3h14v10H1z" fill="#dde" stroke="#556"/><path d="M3 8l4-3v2h6v2H7v2z" fill="#3070d0"/></symbol>
<symbol id="arr" viewBox="0 0 16 16"><path d="M1 3h14v10H1z" fill="#dde" stroke="#556"/><path d="M13 8L9 5v2H3v2h6v2z" fill="#3070d0"/></symbol>
<symbol id="para" viewBox="0 0 16 16"><path d="M5 2h9L11 14H2z" fill="#ffe860" stroke="#222" stroke-width="1.300"/><circle cx="5" cy="2.500" r="1.300" fill="#d02020"/><circle cx="3" cy="13.500" r="1.300" fill="#d02020"/></symbol>
<symbol id="mag" viewBox="0 0 16 16"><circle cx="7" cy="7" r="6" fill="#ffe870" stroke="#806020"/><circle cx="7" cy="7" r="2.500" fill="#fff" stroke="#d02020" stroke-width="1.300"/><path d="M11 11l4 4" stroke="#667" stroke-width="2"/></symbol>
<symbol id="yn" viewBox="0 0 16 16"><path d="M1 1h14v10H1z" fill="#ffee80" stroke="#605020"/><path d="M4 8l2 7 2-3 4 2-3-4 3-1z" fill="#fff" stroke="#333" stroke-width=".8"/></symbol>
<symbol id="win" viewBox="0 0 16 16"><path d="M6 1h9v8H6z" fill="#fff" stroke="#444"/><path d="M6 1h9v2H6z" fill="#456"/><path d="M1 6h10v9H1z" fill="#ffe870" stroke="#604"/></symbol>
<symbol id="tl" viewBox="0 0 16 16"><path d="M2 1h12v14H2z" fill="#f4f0e0" stroke="#333"/><path d="M4 4h8M4 6.500h8M4 9h8M4 11.500h8" stroke="#333"/></symbol>
<symbol id="tg2" viewBox="0 0 16 16"><path d="M1 1h14v14H1z" fill="#f0e8d0" stroke="#333"/><path d="M1 5h14M1 8h14M1 11h14M5 5v10M10 5v10" stroke="#555"/></symbol>
<symbol id="ld" viewBox="0 0 16 16"><use href="#star" width="16" height="16"/><path d="M9 5v7" stroke="#1040b0" stroke-width="2"/><path d="M6 10l3 4 3-4z" fill="#1040b0"/><path d="M4 15h10" stroke="#345"/></symbol>
<symbol id="al" viewBox="0 0 16 16"><path d="M11 3L5 8l6 5z" fill="#7aa0e0"/></symbol>
<symbol id="ar" viewBox="0 0 16 16"><path d="M5 3l6 5-6 5z" fill="#3a70d0"/></symbol>
<symbol id="pn" viewBox="0 0 16 16"><path d="M8 1a3.500 3.500 0 0 1 1 7l-1 6" stroke="#1a3a90" stroke-width="2.500" fill="none"/><path d="M2 15h12" stroke="#1a3a90" stroke-width="1.500"/></symbol>
<symbol id="xx" viewBox="0 0 16 16"><text x="2" y="6" font-size="6.500" font-weight="bold" fill="#556">X.XX</text><path d="M8 7v6" stroke="#9ab" stroke-width="1.500"/><path d="M2 15h12" stroke="#9ab"/></symbol>
<symbol id="eye" viewBox="0 0 16 16"><path d="M1 7q7-8 14 0q-7 6-14 0z" fill="#6aa0e0" stroke="#123"/><circle cx="8" cy="6" r="2" fill="#123"/><path d="M2 15L14 11V15z" fill="#d02020"/><path d="M2 15L7 13.300V15z" fill="#1030d0"/></symbol>
<symbol id="xxa" viewBox="0 0 16 16"><text x="0" y="7" font-size="7" font-weight="bold" fill="#222">X.XX</text><path d="M2 15L14 10V15z" fill="#d02020"/><path d="M2 15L7 13V15z" fill="#1030d0"/></symbol>
<symbol id="bolt" viewBox="0 0 16 16"><path d="M2 4q4-3 6 1t6-1v7q-4 4-6 0t-6 1z" fill="#8090b0" stroke="#456"/></symbol>
<symbol id="abac" viewBox="0 0 16 16"><path d="M1 4h14M1 13h14" stroke="#444" stroke-width="1.500"/><path d="M3 4v9M8 4v9M13 4v9" stroke="#888"/><circle cx="3" cy="9" r="2" fill="#e8c040" stroke="#654"/><circle cx="8" cy="9" r="2" fill="#e8c040" stroke="#654"/><circle cx="13" cy="9" r="2" fill="#e8c040" stroke="#654"/><path d="M8 1h6v3H8z" fill="#eee" stroke="#555"/></symbol>
<symbol id="mesh" viewBox="0 0 16 16"><path d="M1 14L4 5l11-3-2 9z" fill="#888" stroke="#333"/><path d="M3 10l11-3M6 4l-2 10M10 3l-1 10" stroke="#ddd"/></symbol>
<symbol id="gear" viewBox="0 0 16 16"><path d="M8 1v14M1 8h14M3 3l10 10M13 3L3 13" stroke="#2050c0" stroke-dasharray="2 1"/><circle cx="8" cy="8" r="3" fill="#fff" stroke="#2050c0" stroke-width="1.500"/></symbol>
<symbol id="pl1" viewBox="0 0 16 16"><path d="M6 1l7 2-2 12-7-2z" fill="#6aa8f0" stroke="#1a3a90"/><path d="M1 8l14-2-3 3-11 2z" fill="#f08020" stroke="#902"/></symbol>
<symbol id="pl2" viewBox="0 0 16 16"><path d="M6 1l7 2-2 12-7-2z" fill="#6aa8f0" stroke="#1a3a90"/><path d="M1 8h14" stroke="#123" stroke-width="1.500"/><path d="M8 5l4-2v7l-4 3z" fill="#e02020"/></symbol>
<symbol id="pl3" viewBox="0 0 16 16"><path d="M6 1l7 2-2 12-7-2z" fill="#6aa8f0" stroke="#1a3a90"/><path d="M5 3h8v8H5z" fill="#e01818" stroke="#600"/></symbol>
<symbol id="gr3" viewBox="0 0 16 16"><path d="M3 14L5 2h7l2 12z" fill="#c8d8e8" stroke="#89a"/><path d="M4 8h9M8 2v12" stroke="#89a"/><circle cx="8" cy="8" r="1.500" fill="#e04040"/></symbol>
<symbol id="dm" viewBox="0 0 16 16"><path d="M3 3h10v7H3z" fill="#e8e8e8" stroke="#333"/><path d="M3 3h10v2H3z" fill="#567"/><path d="M5 15v-4h5" stroke="#246" fill="none" stroke-width="1.500"/></symbol>
<symbol id="lnk" viewBox="0 0 16 16"><circle cx="5" cy="4" r="3" fill="none" stroke="#456" stroke-width="1.300"/><circle cx="11" cy="12" r="3" fill="none" stroke="#456" stroke-width="1.300"/><path d="M7 6l2 4" stroke="#456"/></symbol>
<symbol id="circ" viewBox="0 0 16 16"><circle cx="8" cy="8" r="6" fill="none" stroke="#4a80c8" stroke-width="2"/><path d="M8 1v14" stroke="#d02020" stroke-dasharray="2 1"/></symbol>
<symbol id="mir" viewBox="0 0 16 16"><path d="M7 2L2 14h5zM9 2l5 12H9z" fill="#e4e8ec" stroke="#445"/><path d="M8 0v16" stroke="#d02020" stroke-dasharray="2 1"/></symbol>
<symbol id="xn" viewBox="0 0 16 16"><path d="M2 2l12 12M14 2L2 14" stroke="#223" stroke-width="1.500"/><circle cx="8" cy="8" r="3" fill="#e02020"/><circle cx="2" cy="2" r="1.300" fill="#e02020"/><circle cx="14" cy="2" r="1.300" fill="#e02020"/></symbol>
<symbol id="inf" viewBox="0 0 16 16"><circle cx="7" cy="9" r="6" fill="#16204a"/><text x="5" y="13" font-size="10" font-weight="bold" fill="#fff">i</text><path d="M9 1h6v6H9z" fill="#eee" stroke="#333"/></symbol>
<symbol id="pg" viewBox="0 0 16 16"><path d="M2 1h12v14H2z" fill="#e0d8b8" stroke="#333"/><circle cx="8" cy="8" r="3.500" fill="#2a5aa8"/></symbol>
<symbol id="gs" viewBox="0 0 16 16"><circle cx="5" cy="11" r="3.500" fill="#6a96d0" stroke="#246"/><circle cx="11" cy="6" r="3" fill="#6a96d0" stroke="#246"/><circle cx="13" cy="12" r="2" fill="#6a96d0" stroke="#246"/></symbol>
<symbol id="bd" viewBox="0 0 16 16"><path d="M2 0h12v13H2z" fill="#1a4a90"/><path d="M6 5l4 1-2 3" stroke="#fff" fill="none"/><path d="M1 16l3-5 3 5z" fill="#e02020" transform="translate(0 -1)"/></symbol>
<symbol id="rd" viewBox="0 0 16 16"><path d="M7 2h7v12H7z" fill="#f4f0e0" stroke="#888"/><path d="M6 1l3 9H2z" fill="#e02020"/><path d="M6 10l3 5H3z" fill="#c01818"/></symbol>
<symbol id="sd" viewBox="0 0 16 16"><use href="#star" width="16" height="16"/><rect x="7" y="7" width="5" height="5" fill="#d02020"/></symbol>
<symbol id="sl" viewBox="0 0 16 16"><use href="#star" width="16" height="16"/><path d="M2 15L14 3" stroke="#d02020" stroke-width="2"/></symbol>
<symbol id="sb" viewBox="0 0 16 16"><use href="#star" width="16" height="16"/><path d="M2 14L12 2M5 15L14 4" stroke="#6080c0" stroke-width="1.300"/><path d="M11 10h4M13 10v5M11 15h4" stroke="#345"/></symbol>
<symbol id="sp2" viewBox="0 0 16 16"><use href="#star" width="16" height="16"/><path d="M8 2h6v6l-4 3-3 4" fill="none" stroke="#345" stroke-width="1.300"/><g fill="#d02020"><rect x="7" y="1" width="3" height="3"/><rect x="12" y="6" width="3" height="3"/><rect x="5" y="13" width="3" height="3"/></g></symbol>
<symbol id="sg2" viewBox="0 0 16 16"><use href="#star" width="16" height="16"/><rect x="5" y="6" width="4" height="4" fill="#2a8a3a"/><path d="M1 15q6-9 13 0z" fill="#3aa050"/></symbol>
<symbol id="st2" viewBox="0 0 16 16"><use href="#star" width="16" height="16"/><path d="M8 6v4M3 10h10" stroke="#222"/><path d="M1 11h4v4H1zM11 11h4v4h-4z" fill="#3aa050"/></symbol>
<symbol id="cb" viewBox="0 0 16 16"><path d="M1 9l7-6 7 5-7 6z" fill="#60c0a0" stroke="#246"/><path d="M5 6l5-3 5 4-5 3z" fill="#4a90e0"/></symbol>
<symbol id="dim" viewBox="0 0 16 16"><use href="#star" width="16" height="16"/><path d="M2 10h12M2 6v9M14 6v9" stroke="#111" stroke-width="1.300"/></symbol>
<symbol id="sx" viewBox="0 0 16 16"><use href="#star" width="16" height="16"/><text x="6" y="7" font-size="6" fill="#333">XX</text><path d="M2 15L10 8" stroke="#456" stroke-width="1.300"/></symbol>
<symbol id="sr" viewBox="0 0 16 16"><use href="#star" width="16" height="16"/><path d="M3 4h10v10H3z" fill="none" stroke="#444" stroke-dasharray="1 1"/></symbol>
<symbol id="sq" viewBox="0 0 16 16"><use href="#star" width="16" height="16"/><path d="M3 5h11v10H3z" fill="#6a9cd8" stroke="#234"/></symbol>
<symbol id="fr" viewBox="0 0 16 16"><path d="M2 2h12v12H2z" fill="#7090b8" stroke="#234"/><path d="M4.500 4.500h7v7h-7z" fill="#ddd" stroke="#d02020" stroke-width="1.500"/></symbol>
<symbol id="ars" viewBox="0 0 16 16"><path d="M3 14V5h3l-3-4-3 4" transform="translate(2 0)" fill="#4a7ac0" stroke="#234"/><path d="M10 2v9h3l-3 4-3-4" transform="translate(2 0)" fill="#4a7ac0" stroke="#234"/><path d="M1 8h14" stroke="#d02020"/></symbol>
<symbol id="cy" viewBox="0 0 16 16"><path d="M2 3q6-3 12 0v10q-6 3-12 0z" fill="#5a88c8" stroke="#234"/><path d="M2 3q6 3 12 0" fill="none" stroke="#234"/></symbol>
<symbol id="sc" viewBox="0 0 16 16"><use href="#star" width="16" height="16"/><path d="M7 3h8v9H7z" fill="#fff" stroke="#456"/><path d="M3 7h9v8H3z" fill="#78a8e0" stroke="#234"/></symbol>
<symbol id="nd" viewBox="0 0 16 16"><path d="M1 3h6M1 13h6M1 3v10" fill="none" stroke="#345" stroke-dasharray="2 1"/><rect x="7" y="5" width="6" height="6" fill="#2a80e0"/><path d="M13 8h3" stroke="#345"/></symbol>
<symbol id="sa" viewBox="0 0 16 16"><use href="#star" width="16" height="16"/><path d="M9 3v9" stroke="#1040b0" stroke-width="2"/><path d="M6 10l3 5 3-5z" fill="#d02020"/></symbol>
<symbol id="gfr" viewBox="0 0 16 16"><path d="M2 4h12M2 9h12M4 4v10M12 4v10M8 4v10" stroke="#2050b0" stroke-width="1.300"/><g fill="#d02020"><circle cx="4" cy="3" r="1.500"/><circle cx="12" cy="3" r="1.500"/><circle cx="8" cy="14" r="1.500"/></g></symbol>
<symbol id="bot" viewBox="0 0 16 16"><path d="M3 1h10v14H3z" fill="#8ab0d8" stroke="#234"/><path d="M5 3h6v4H5z" fill="#ddd" stroke="#234"/><path d="M5 10h6v3H5z" fill="#456"/></symbol>
<symbol id="tb2" viewBox="0 0 16 16"><use href="#star" width="16" height="16"/><path d="M7 5h5v3l2 7H5l2-7z" fill="#5a88c8" stroke="#234"/></symbol>
<symbol id="hand" viewBox="0 0 16 16"><path d="M3 2l10 2-2 4 3 6-4 1-3-4-4 1 2-5z" fill="#8a8070" stroke="#3a3020"/></symbol>
<symbol id="mr" viewBox="0 0 16 16"><circle cx="7" cy="7" r="5.500" fill="#e8eef8" stroke="#345" stroke-width="1.300"/><path d="M11 11l4 4" stroke="#345" stroke-width="2"/><rect x="6" y="1" width="5" height="5" fill="none" stroke="#d02020"/></symbol>
<symbol id="mx" viewBox="0 0 16 16"><circle cx="7" cy="7" r="5.500" fill="#e8eef8" stroke="#345" stroke-width="1.300"/><path d="M11 11l4 4" stroke="#345" stroke-width="2"/><path d="M5 3l5 7M10 3l-5 7" stroke="#d02020" stroke-width="1.500"/></symbol>
<symbol id="wr" viewBox="0 0 16 16"><path d="M2 5l4-3h8v9l-4 3H2z" fill="#d8dce4" stroke="#556"/><path d="M2 5h8v9M10 5l4-3" fill="none" stroke="#556"/></symbol>
<symbol id="cb2" viewBox="0 0 16 16"><path d="M2 7l4-3h4v10H2z" fill="#fff" stroke="#456"/><path d="M6 4l4-3h5v9l-5 4V5H6z" fill="#a0c0e0" stroke="#456"/></symbol>
<symbol id="axX" viewBox="0 0 16 16"><path d="M3 1v11M3 12l3-3" stroke="#2a60c0" stroke-width="1.500" fill="none"/><path d="M3 3h10" stroke="#109020" stroke-width="1.500"/><text x="7" y="15" font-size="10" fill="#222">X</text></symbol>
<symbol id="axY" viewBox="0 0 16 16"><path d="M14 3H3" stroke="#d02020" stroke-width="1.500"/><path d="M3 1v11" stroke="#2a60c0" stroke-width="1.500"/><text x="7" y="15" font-size="10" fill="#222">Y</text></symbol>
<symbol id="axZ" viewBox="0 0 16 16"><path d="M2 3h11" stroke="#d02020" stroke-width="1.500"/><path d="M3 3v11" stroke="#109020" stroke-width="1.500"/><text x="7" y="15" font-size="10" fill="#222">Z</text></symbol>
<symbol id="axm" viewBox="0 0 16 16"><path d="M2 3h11" stroke="#109020" stroke-width="2"/><circle cx="13" cy="3" r="2" fill="#d02020"/><path d="M10 5v9" stroke="#2a60c0" stroke-width="2"/><text x="0" y="14" font-size="8" fill="#222">-X</text></symbol>
<symbol id="scp" viewBox="0 0 16 16"><path d="M3 14h11l-2-2H6zM7 2l5 2-2 8H6z" fill="#556" stroke="#223"/><path d="M11 2l3-1" stroke="#223" stroke-width="2"/></symbol>
<symbol id="shd" viewBox="0 0 16 16"><path d="M2 3l8-2 4 5-2 9H6L2 9z" fill="#9aa4b4" stroke="#556"/><path d="M6 5l6 1-1 7" fill="none" stroke="#556"/></symbol>
<symbol id="por" viewBox="0 0 16 16"><path d="M2 14L4 3h10l-1 11" fill="none" stroke="#222" stroke-width="1.500"/><path d="M4 3h10M3.500 7L3 10M13.500 6L13 10" stroke="#d02020" stroke-width="1.500"/></symbol>
<symbol id="mon" viewBox="0 0 16 16"><path d="M2 4h12v8H2z" fill="#bbb" stroke="#444"/><path d="M6 7h5v3H6z" fill="#e04040"/><path d="M8 8h5v3H8z" fill="#40a0e0"/></symbol>
<symbol id="ib" viewBox="0 0 16 16"><path d="M4 2h8M8 2v8M4 10h8" stroke="#26408a" stroke-width="1.500" fill="none"/><path d="M1 15L15 11V15z" fill="#c03030"/><path d="M1 15L6 13.500V15z" fill="#1030d0"/></symbol>
<symbol id="s3" viewBox="0 0 16 16"><use href="#srf" width="16" height="16"/></symbol>
<symbol id="cl" viewBox="0 0 16 16"><path d="M2 3h10l2 2v9H4z" fill="#30a080" stroke="#345"/><path d="M5 5h6v6H5z" fill="#e0e040"/><circle cx="8" cy="8" r="2" fill="#e04040"/></symbol>
<symbol id="st3" viewBox="0 0 16 16"><circle cx="8" cy="4" r="2.500" fill="#207030"/><path d="M8 6v9" stroke="#207030" stroke-width="2"/><path d="M10 3l5-1v3z" fill="#d02020"/><path d="M5 12l3 4 3-4z" fill="#10b030"/></symbol>
<symbol id="st4" viewBox="0 0 16 16"><path d="M1 10L12 2M1 14L15 8" stroke="#8a9ab8" stroke-width="1.500"/><path d="M1 14L6 10v4z" fill="#d02020"/></symbol>
<symbol id="yy" viewBox="0 0 16 16"><path d="M1 1h6v6H1zM9 1h6v6H9zM1 9h6v6H1zM9 9h6v6H9z" fill="#f4e070" stroke="#555"/></symbol>
<symbol id="sin" viewBox="0 0 16 16"><path d="M4 1h8M8 1v7M4 8h8" stroke="#6a80b8"/><path d="M0 12q4-6 8 0t8 0" fill="none" stroke="#d02020"/></symbol>
<symbol id="tbl" viewBox="0 0 16 16"><path d="M2 1h12v14H2z" fill="#eee" stroke="#234"/><path d="M2 4h12M2 8h12M2 12h12M8 1v14" stroke="#234"/><path d="M3 2h4v2H3zM9 6h4v2H9zM3 9h4v2H3z" fill="#d02020"/></symbol>
<symbol id="pag" viewBox="0 0 16 16"><path d="M2 1h12v11l-3 3H2z" fill="#fff" stroke="#222"/><path d="M4 3h2v2H4z" fill="#e02020"/><path d="M4 6h2v2H4z" fill="#10a030"/><path d="M4 9h2v2H4z" fill="#2040d0"/><path d="M7 4h5M7 7h5M7 10h5" stroke="#222"/></symbol>
<symbol id="wnd" viewBox="0 0 16 16"><use href="#star" width="16" height="16"/><path d="M3 14L12 5" stroke="#667" stroke-width="3"/><path d="M11 4l3-2v3z" fill="#d02020"/><path d="M2 15l4-4" stroke="#2a60c0" stroke-width="2"/></symbol>
<symbol id="rbw" viewBox="0 0 16 16"><path d="M1 15V2l7 13z" fill="#e02020"/><path d="M4 15V6l5 9z" fill="#f0e000"/><path d="M6 15V9l4 6z" fill="#10b030"/><path d="M8 15v-3l2 3z" fill="#2040d0"/><path d="M8 12L15 1" stroke="#222" stroke-width="1.500"/></symbol>
<symbol id="dd" viewBox="0 0 8 8"><path d="M1 2h6L4 6z" fill="#666"/></symbol>
</defs>
<!-- Active backgrounds -->
<g fill="#fcd690" stroke="#c8a060"><rect x="366.500" y="57.500" width="20" height="21" rx="2"/><rect x="387.500" y="57.500" width="20" height="21" rx="2"/><rect x="748" y="57.500" width="20" height="21" rx="2"/><rect x="770" y="57.500" width="20" height="21" rx="2"/><rect x="922" y="57.500" width="20" height="21" rx="2"/><rect x="957" y="83.500" width="20" height="21" rx="2"/><rect x="1206" y="83.500" width="20" height="21" rx="2"/><rect x="304" y="681" width="20" height="22" rx="2"/><rect x="408" y="681" width="20" height="22" rx="2"/><rect x="430" y="681" width="20" height="22" rx="2"/><rect x="832" y="681" width="20" height="22" rx="2" fill="#e6dcc0"/></g>
<!-- separators -->
<path d="M190.500 58v20M243.500 58v20M359.500 58v20M413.500 58v20M793.500 58v20M1035.500 58v20M142.500 84v20M215.500 84v20M302.500 84v20M472.500 84v20M638.500 84v20M760.500 84v20M905.500 84v20M1003.500 84v20M1195.500 84v20M351.500 682v20M402.500 682v20M454.500 682v20M505.500 682v20M715.500 682v20M768.500 682v20M797.500 682v20M827.500 682v20" stroke="#a8acb6"/>
<path d="M6 60v17M873 60v17M1199 60v17M6 86v17M951 86v17" stroke="#8a8e98" stroke-dasharray="2 2" stroke-width="2"/>
<g>
<!-- row 1 -->
<use href="#doc" x="13" y="60" width="16" height="16"/><use href="#fold" x="36" y="60" width="16" height="16"/><use href="#cab" x="57" y="60" width="16" height="16"/><use href="#cabb" x="79" y="60" width="16" height="16"/><use href="#save" x="102" y="60" width="16" height="16"/><use href="#note" x="124" y="60" width="16" height="16"/><use href="#print" x="145" y="60" width="16" height="16"/><use href="#prev" x="168" y="60" width="16" height="16"/><use href="#und" x="198" y="60" width="16" height="16"/><use href="#red" x="220" y="60" width="16" height="16"/><use href="#para" x="251" y="60" width="16" height="16"/><use href="#mag" x="272" y="60" width="16" height="16"/><use href="#mag" x="295" y="60" width="16" height="16"/><use href="#yn" x="316" y="60" width="16" height="16"/><use href="#win" x="337" y="60" width="16" height="16"/><use href="#tl" x="368" y="60" width="16" height="16"/><use href="#tg2" x="390" y="60" width="16" height="16"/><use href="#ld" x="420" y="60" width="16" height="16"/><use href="#al" x="663" y="60" width="16" height="16"/><use href="#ar" x="683" y="60" width="16" height="16"/><use href="#pn" x="706" y="60" width="16" height="16"/><use href="#xx" x="728" y="60" width="16" height="16"/><use href="#eye" x="750" y="60" width="16" height="16"/><use href="#xxa" x="772" y="60" width="16" height="16"/>
<use href="#bolt" x="802" y="60" width="16" height="16"/><use href="#abac" x="824" y="60" width="16" height="16"/><use href="#abac" x="846" y="60" width="16" height="16"/>
<use href="#mesh" x="880" y="60" width="16" height="16"/><use href="#gear" x="902" y="60" width="16" height="16"/><use href="#pl1" x="924" y="60" width="16" height="16"/><use href="#pl2" x="946" y="60" width="16" height="16"/><use href="#pl3" x="968" y="60" width="16" height="16"/><use href="#gr3" x="989" y="60" width="16" height="16"/><use href="#dm" x="1011" y="60" width="16" height="16"/><use href="#lnk" x="1042" y="60" width="16" height="16"/><use href="#circ" x="1063" y="60" width="16" height="16"/><use href="#mir" x="1085" y="60" width="16" height="16"/><use href="#xn" x="1107" y="60" width="16" height="16"/><use href="#inf" x="1129" y="60" width="16" height="16"/><use href="#pg" x="1151" y="60" width="16" height="16"/><use href="#gs" x="1173" y="60" width="16" height="16"/>
<use href="#bd" x="1209" y="60" width="16" height="16"/><use href="#bd" x="1231" y="60" width="16" height="16"/><use href="#rd" x="1252" y="60" width="16" height="16"/><use href="#rd" x="1274" y="60" width="16" height="16"/>
<!-- row 2 -->
<use href="#sd" x="13" y="87" width="16" height="16"/><use href="#sl" x="48" y="87" width="16" height="16"/><use href="#sb" x="72" y="87" width="16" height="16"/><use href="#sp2" x="108" y="87" width="16" height="16"/><use href="#sg2" x="149" y="87" width="16" height="16"/><use href="#st2" x="170" y="87" width="16" height="16"/><use href="#cb" x="192" y="87" width="16" height="16"/><use href="#dim" x="224" y="87" width="16" height="16"/><use href="#sx" x="257" y="87" width="16" height="16"/><use href="#sr" x="279" y="87" width="16" height="16"/><use href="#sq" x="312" y="87" width="16" height="16"/><use href="#fr" x="347" y="87" width="16" height="16"/><use href="#ars" x="381" y="87" width="16" height="16"/><use href="#cy" x="415" y="87" width="16" height="16"/><use href="#sc" x="438" y="87" width="16" height="16"/><use href="#nd" x="482" y="87" width="16" height="16"/><use href="#sa" x="512" y="87" width="16" height="16"/><use href="#gfr" x="537" y="87" width="16" height="16"/><use href="#gfr" x="558" y="87" width="16" height="16"/><use href="#bot" x="581" y="87" width="16" height="16"/><use href="#tb2" x="604" y="87" width="16" height="16"/><use href="#hand" x="650" y="87" width="16" height="16"/><use href="#mr" x="673" y="87" width="16" height="16"/><use href="#mx" x="695" y="87" width="16" height="16"/><use href="#wr" x="716" y="87" width="16" height="16"/><use href="#cb2" x="739" y="87" width="16" height="16"/><use href="#axX" x="767" y="87" width="16" height="16"/><use href="#axY" x="790" y="87" width="16" height="16"/><use href="#axZ" x="812" y="87" width="16" height="16"/><use href="#axm" x="835" y="87" width="16" height="16"/><use href="#scp" x="871" y="87" width="16" height="16"/><use href="#shd" x="914" y="87" width="16" height="16"/>
<use href="#por" x="959" y="87" width="16" height="16"/><use href="#mon" x="981" y="87" width="16" height="16"/><use href="#ib" x="1010" y="87" width="16" height="16"/><use href="#s3" x="1032" y="87" width="16" height="16"/><use href="#cl" x="1055" y="87" width="16" height="16"/><use href="#st3" x="1077" y="87" width="16" height="16"/><use href="#st4" x="1098" y="87" width="16" height="16"/><use href="#yy" x="1123" y="87" width="16" height="16"/><use href="#sin" x="1155" y="87" width="16" height="16"/><use href="#tbl" x="1177" y="87" width="16" height="16"/><use href="#pag" x="1208" y="87" width="16" height="16"/><use href="#wnd" x="1232" y="87" width="16" height="16"/><use href="#rbw" x="1266" y="87" width="16" height="16"/>
<g><use href="#dd" x="36" y="91" width="8" height="8"/><use href="#dd" x="93" y="91" width="8" height="8"/><use href="#dd" x="129" y="91" width="8" height="8"/><use href="#dd" x="245" y="91" width="8" height="8"/><use href="#dd" x="333" y="91" width="8" height="8"/><use href="#dd" x="367" y="91" width="8" height="8"/><use href="#dd" x="402" y="91" width="8" height="8"/><use href="#dd" x="459" y="91" width="8" height="8"/><use href="#dd" x="502" y="91" width="8" height="8"/><use href="#dd" x="625" y="91" width="8" height="8"/><use href="#dd" x="856" y="91" width="8" height="8"/><use href="#dd" x="891" y="91" width="8" height="8"/><use href="#dd" x="934" y="91" width="8" height="8"/><use href="#dd" x="1143" y="91" width="8" height="8"/><use href="#dd" x="1253" y="91" width="8" height="8"/><use href="#dd" x="1287" y="91" width="8" height="8"/></g>
<!-- results toolbar -->
<use href="#gt" x="240" y="684" width="16" height="16"/><use href="#tp" x="262" y="684" width="16" height="16"/><use href="#td" x="284" y="684" width="16" height="16"/><use href="#ib" x="306" y="684" width="16" height="16"/><use href="#chrt" x="328" y="684" width="16" height="16"/><use href="#arl" x="358" y="684" width="16" height="16"/><use href="#arr" x="380" y="684" width="16" height="16"/><use href="#ca1" x="410" y="684" width="16" height="16"/><use href="#ca2" x="432" y="684" width="16" height="16"/><use href="#tg2" x="462" y="684" width="16" height="16"/><use href="#note" x="484" y="684" width="16" height="16"/><use href="#al" x="723" y="684" width="16" height="16"/><use href="#ar" x="743" y="684" width="16" height="16"/><use href="#dm" x="774" y="684" width="16" height="16"/><use href="#pn" x="805" y="684" width="16" height="16" opacity=".5"/><use href="#pag" x="834" y="684" width="16" height="16"/><rect x="865" y="684" width="15" height="15" fill="#1a8a3a" stroke="#0a5020"/><path d="M868 687l9 9M877 687l-9 9" stroke="#fff" stroke-width="1.500"/><use href="#tbl" x="894" y="684" width="16" height="16"/>
<!-- small window icons -->
<g fill="none" stroke="#5a6070" stroke-width="1.200"><path d="M194 112v6M192 112h4M191 118h6M194 118v4M209 112l8 8M217 112l-8 8"/><path d="M1569 112v6M1567 112h4M1566 118h6M1569 118v4M1585 112l8 8M1593 112l-8 8"/><path d="M1410 664v6M1408 664h4M1407 670h6M1410 670v3M1426 664l7 7M1433 664l-7 7"/></g>
<circle cx="1582" cy="573" r="4" fill="#dde" stroke="#556"/><path d="M1585 576l4 3" stroke="#556" stroke-width="2"/>
<!-- nav tabs -->
<use href="#prev" x="8" y="1157" width="15" height="15"/><use href="#note" x="61" y="1157" width="15" height="15"/><use href="#mr" x="116" y="1157" width="15" height="15"/><use href="#srf" x="169" y="1157" width="15" height="15"/>
<!-- panel tabs -->
<use href="#pag" x="1451" y="1157" width="15" height="15"/>
<path d="M1486 1159v10M1480 1170h12" stroke="#665520" stroke-width="1.500"/><path d="M1480 1161h12M1480 1161l-3 5h6zM1492 1161l-3 5h6z" fill="#d0a840" stroke="#665520"/>
<use href="#scp" x="1507" y="1157" width="15" height="15"/>
</g>
</svg>
</body></html>
